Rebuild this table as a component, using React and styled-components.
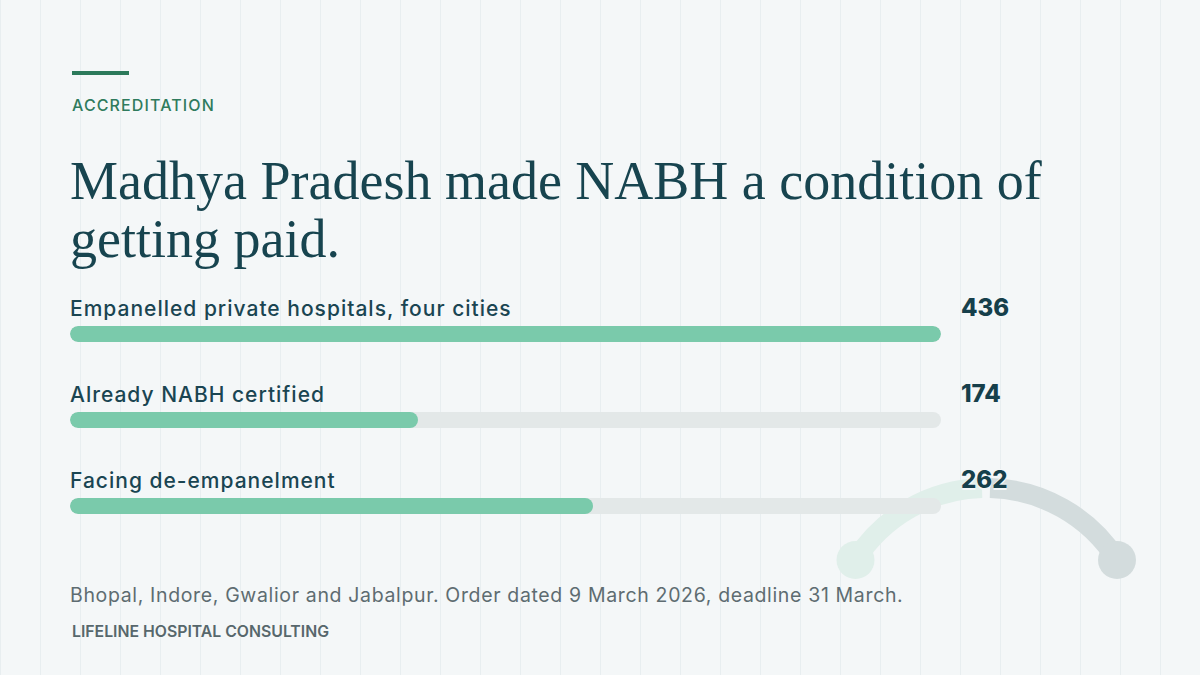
import React from 'react';
import styled, {createGlobalStyle} from 'styled-components';

const GlobalStyle = createGlobalStyle`
  html, body {
    margin: 0;
    padding: 0;
  }
  body {
    font-family: Inter, "Noto Sans", sans-serif;
    background: #f4f7f8;
  }
`;

const Canvas = styled.div`
  position: relative;
  width: 1200px;
  height: 675px;
  overflow: hidden;
  background-color: #f4f7f8;
  background-image: linear-gradient(to right, #e8eef0 1px, transparent 1px);
  background-size: 40px 100%;
`;

const Content = styled.div`
  position: relative;
  z-index: 1;
  display: flex;
  flex-direction: column;
  padding: 71px 0 0 70px;
`;

const Accent = styled.div`
  width: 57px;
  height: 4px;
  margin-left: 2px;
  background: #2c7a5b;
`;

const Kicker = styled.div`
  margin: 20px 0 0 2px;
  font-size: 16px;
  line-height: 20px;
  font-weight: 500;
  letter-spacing: 0.07em;
  color: #2f7b5d;
`;

const Headline = styled.h1`
  margin: 37px 0 0;
  width: 1000px;
  font-family: "Liberation Serif", serif;
  font-weight: 400;
  font-size: 54px;
  line-height: 58px;
  color: #17444f;
`;

const Rows = styled.div`
  display: flex;
  flex-direction: column;
  gap: 40px;
  margin-top: 28px;
`;

const Row = styled.div`
  display: grid;
  grid-template-columns: 871px auto;
  column-gap: 20px;
  row-gap: 4px;
  align-items: baseline;
`;

const Label = styled.div`
  font-size: 21px;
  line-height: 26px;
  font-weight: 500;
  letter-spacing: 1px;
  color: #1a4552;
`;

const Value = styled.div`
  font-size: 24px;
  line-height: 20px;
  font-weight: 800;
  color: #163f4b;
  text-shadow: 0 2px 0 #f4f7f8, 0 -1px 0 #f4f7f8;
`;

const Track = styled.div`
  height: 16px;
  border-radius: 8px;
  background: #e3e8e8;
  overflow: hidden;
`;

const Fill = styled.div`
  height: 100%;
  border-radius: 8px;
  background: #7acaab;
`;

const Note = styled.p`
  margin: 68px 0 0;
  font-size: 19.5px;
  line-height: 26px;
  letter-spacing: 0.65px;
  color: #5e6c71;
`;

const Brand = styled.div`
  margin: 13px 0 0 2px;
  font-size: 15.8px;
  line-height: 22px;
  font-weight: 600;
  color: #57676c;
`;

const Arc = styled.svg`
  position: absolute;
  left: 830px;
  top: 460px;
  z-index: 0;
`;

const rows = [
  {label: 'Empanelled private hospitals, four cities', value: 436},
  {label: 'Already NABH certified', value: 174},
  {label: 'Facing de-empanelment', value: 262},
];

const max = 436;

function App() {
  return (
    <Canvas>
      <GlobalStyle/>
      <Arc width="320" height="130" viewBox="830 460 320 130">
        <path d="M 855.5 560 A 155 155 0 0 1 982 488.1" fill="none" stroke="#e0efea" strokeWidth="20"/>
        <circle cx="855.5" cy="560" r="19" fill="#e0efea"/>
        <path d="M 990 488.1 A 155 155 0 0 1 1117 560" fill="none" stroke="#d3dcdd" strokeWidth="20"/>
        <circle cx="1117" cy="560" r="19" fill="#d3dcdd"/>
      </Arc>
      <Content>
        <Accent/>
        <Kicker>ACCREDITATION</Kicker>
        <Headline>Madhya Pradesh made NABH a condition of getting paid.</Headline>
        <Rows>
          {rows.map(r => (
            <Row key={r.label}>
              <Label>{r.label}</Label>
              <Value>{r.value}</Value>
              <Track>
                <Fill style={{width: (r.value / max * 100) + '%'}}/>
              </Track>
            </Row>
          ))}
        </Rows>
        <Note>Bhopal, Indore, Gwalior and Jabalpur. Order dated 9 March 2026, deadline 31 March.</Note>
        <Brand>LIFELINE HOSPITAL CONSULTING</Brand>
      </Content>
    </Canvas>
  );
}

export default App;
